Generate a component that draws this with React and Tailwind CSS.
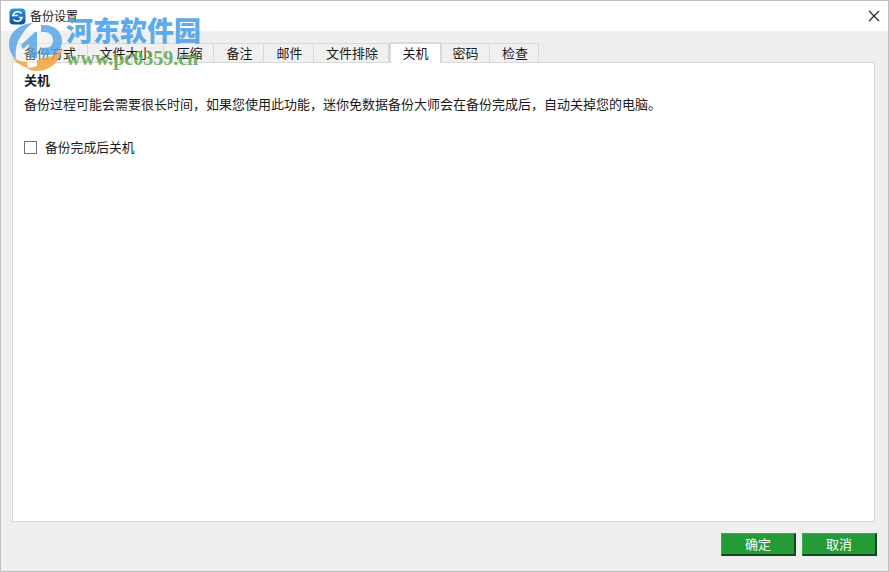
import React from 'react';

const tabs = [
    { label: '备份方式', width: 'w-[76px]' },
    { label: '文件大小', width: 'w-[76px]' },
    { label: '压缩', width: 'w-[50px] pl-[2px]' },
    { label: '备注', width: 'w-[50px] pl-[2px]' },
    { label: '邮件', width: 'w-[50px] pl-[2px]' },
    { label: '文件排除', width: 'w-[75px] pl-[2px]' },
    { label: '关机', width: 'w-[53px]', active: true },
    { label: '密码', width: 'w-[48px]' },
    { label: '检查', width: 'w-[49px] pl-[2px]' },
];

function AppIcon() {
    return (
        <svg width="17" height="17" viewBox="0 0 17 17" className="shrink-0">
            <defs>
                <linearGradient id="appIconBg" x1="0" y1="0" x2="0" y2="1">
                    <stop offset="0" stopColor="#2f9be0" />
                    <stop offset="1" stopColor="#0b4f94" />
                </linearGradient>
            </defs>
            <rect x="0.5" y="0.5" width="16" height="16" rx="4" fill="url(#appIconBg)" />
            <path d="M4 7 A5 5 0 0 1 12.5 5.5" fill="none" stroke="#fff" strokeWidth="1.6" />
            <path d="M13 10 A5 5 0 0 1 4.5 11.5" fill="none" stroke="#fff" strokeWidth="1.6" />
            <path d="M3 7.5 H9 M10 9.5 H14" stroke="#fff" strokeWidth="1.4" />
        </svg>
    );
}

function Watermark() {
    return (
        <div className="absolute z-20 left-[6px] top-[15px] flex pointer-events-none">
            <svg width="58" height="56" viewBox="0 0 58 56" className="shrink-0 opacity-85">
                {/* white halo behind the mark */}
                <ellipse cx="28" cy="30" rx="27" ry="24" fill="#ffffff" opacity="0.3" />
                {/* left crescent */}
                <path d="M26 7 C12 8 2 17 2 28 C2 35 5 40 9 43 C8 36 9 27 14 20 C17 15 21 10 26 7 Z" fill="#5aa7e6" />
                {/* the "1" */}
                <path d="M14 29 L28 16 L30 16 L30 42 L22 42 L22 28 L16 33 Z" fill="#5aa7e6" />
                {/* the "D" */}
                <path d="M34 9 C47 8 55 15 55 25 C55 31 52 36 47 39 L34 39 L34 32 C42 33 46 30 46 24 C46 19 42 16 37 16 L34 16 Z" fill="#5aa7e6" />
                {/* orange sweep */}
                <path d="M55 31 C55 44 44 55 30 55 C26 55 22 54 19 52 C28 52 38 47 44 41 C49 38 53 35 55 31 Z" fill="#f3a23f" />
                <path d="M30 44 L44 40 C41 46 36 51 30 54 Z" fill="#f3a23f" />
                <path d="M5 40 C9 44 14 46 20 46 L21 52 C14 50 8 46 5 40 Z" fill="#f3a23f" />
            </svg>
            <div className="ml-[1px] flex flex-col">
                <span className="font-['Noto_Sans_CJK_SC',sans-serif] font-black text-[27px] leading-[28px] whitespace-nowrap text-[#4da3ea] opacity-90">河东软件园</span>
                <span className="mt-[2px] font-['Liberation_Serif',serif] font-bold text-[20px] leading-[24px] whitespace-nowrap text-[#5aa84a] opacity-85">www.pc0359.cn</span>
            </div>
        </div>
    );
}

export default function App() {
    return (
        <div className="relative w-[889px] h-[572px] flex flex-col overflow-hidden bg-[#efefef] border border-[#c0c0c0] text-[13px] text-[#1a1a1a] font-['Noto_Sans_CJK_SC',sans-serif]">
            <div className="h-[30px] shrink-0 bg-white flex items-center pl-[8px] pr-[8px]">
                <AppIcon />
                <span className="ml-[4px] text-[12px]">备份设置</span>
                <svg width="12" height="12" viewBox="0 0 12 12" className="ml-auto">
                    <path d="M1 1 L11 11 M11 1 L1 11" stroke="#222" strokeWidth="1.1" />
                </svg>
            </div>

            <div className="flex-1 min-h-0 flex flex-col pl-[11px] pr-[13px] pt-[11px]">
                <div className="h-[20px] shrink-0 flex items-end relative z-10">
                    {tabs.map((tab) => (
                        <div
                            key={tab.label}
                            className={
                                tab.active
                                    ? `${tab.width} h-[21px] -mb-[1px] pb-[2px] flex items-center justify-center bg-white border-2 border-b-0 border-[#d9d9d9]`
                                    : `${tab.width} h-[19px] flex items-center justify-center bg-[#f0f0f0] border border-l-0 first:border-l border-b-0 border-[#d9d9d9]`
                            }
                        >
                            {tab.label}
                        </div>
                    ))}
                </div>
                <div className="h-[460px] shrink-0 bg-white border border-[#d9d9d9] pl-[11px] pt-[7px]">
                    <h2 className="font-bold leading-[20px]">关机</h2>
                    <p className="mt-[4px] leading-[20px]">备份过程可能会需要很长时间，如果您使用此功能，迷你免数据备份大师会在备份完成后，自动关掉您的电脑。</p>
                    <label className="mt-[23px] flex items-center h-[20px]">
                        <span className="w-[13px] h-[13px] border border-[#707070] bg-white" />
                        <span className="ml-[8px] text-[12.8px]">备份完成后关机</span>
                    </label>
                </div>
                <div className="flex justify-end gap-[6px] mt-[11px] -mr-[2px]">
                    <button className="w-[75px] h-[23px] bg-[#259b37] text-white border-t border-l border-[#35b048] border-b-2 border-r-2 border-b-[#0d4a1a] border-r-[#0d4a1a]">确定</button>
                    <button className="w-[75px] h-[23px] bg-[#259b37] text-white border-t border-l border-[#35b048] border-b-2 border-r-2 border-b-[#0d4a1a] border-r-[#0d4a1a]">取消</button>
                </div>
            </div>

            <Watermark />
        </div>
    );
}
